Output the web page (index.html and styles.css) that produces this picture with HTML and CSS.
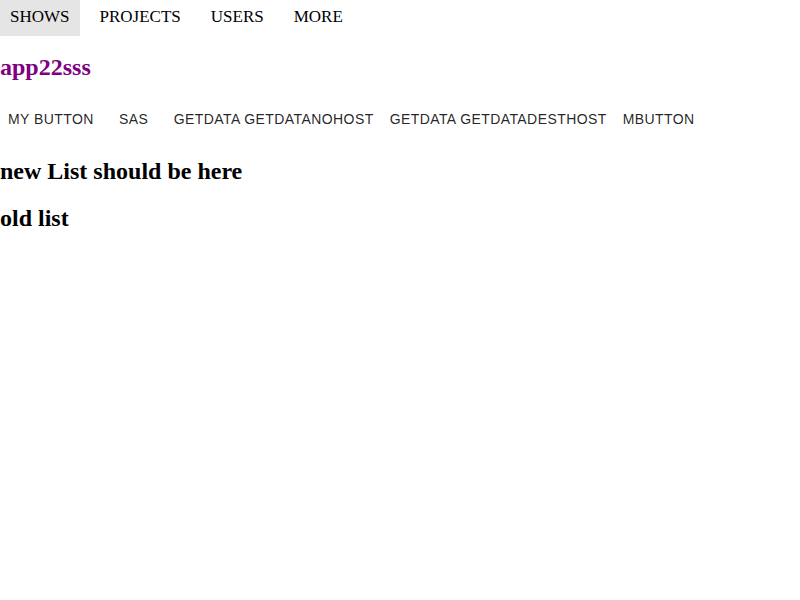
FILE: index.html
```html
<!DOCTYPE html>
<html>
<head>
<meta charset="utf-8">
<link rel="stylesheet" href="styles.css">
</head>
<body>
<nav class="tabs">
  <a class="tab active">SHOWS</a>
  <a class="tab">PROJECTS</a>
  <a class="tab">USERS</a>
  <a class="tab">MORE</a>
</nav>
<h2 class="title">app22sss</h2>
<div class="buttons">
  <button class="btn">My Button</button><button class="btn">sas</button><button class="btn">getData getDataNoHost</button><button class="btn">getData getDataDestHost</button><button class="btn">mbutton</button>
</div>
<h2 class="heading">new List should be here</h2>
<h2 class="heading">old list</h2>
</body>
</html>
```
FILE: styles.css
```css
html, body {
  margin: 0;
  padding: 0;
  background: #fff;
  font-family: "Liberation Serif", serif;
  font-size: 16px;
}
.tabs {
  display: flex;
  gap: 10px;
}
.tab {
  display: block;
  padding: 7px 10px 9px;
  height: 20px;
  line-height: 20px;
  font-size: 17px;
  color: #000;
}
.tab.active {
  background: #e5e5e5;
}
.title {
  color: #800080;
  font-size: 24px;
  font-weight: bold;
  margin: 18px 0 20px;
}
.buttons {
  display: flex;
}
.btn {
  min-width: 64px;
  padding: 6px 8px;
  border: 0;
  background: transparent;
  font-family: "Liberation Sans", Arial, sans-serif;
  font-size: 14px;
  line-height: 24.5px;
  letter-spacing: 0.03em;
  text-transform: uppercase;
  color: rgba(0,0,0,0.87);
  cursor: pointer;
}
.heading {
  font-size: 24px;
  font-weight: bold;
  margin: 20px 0;
}
```
